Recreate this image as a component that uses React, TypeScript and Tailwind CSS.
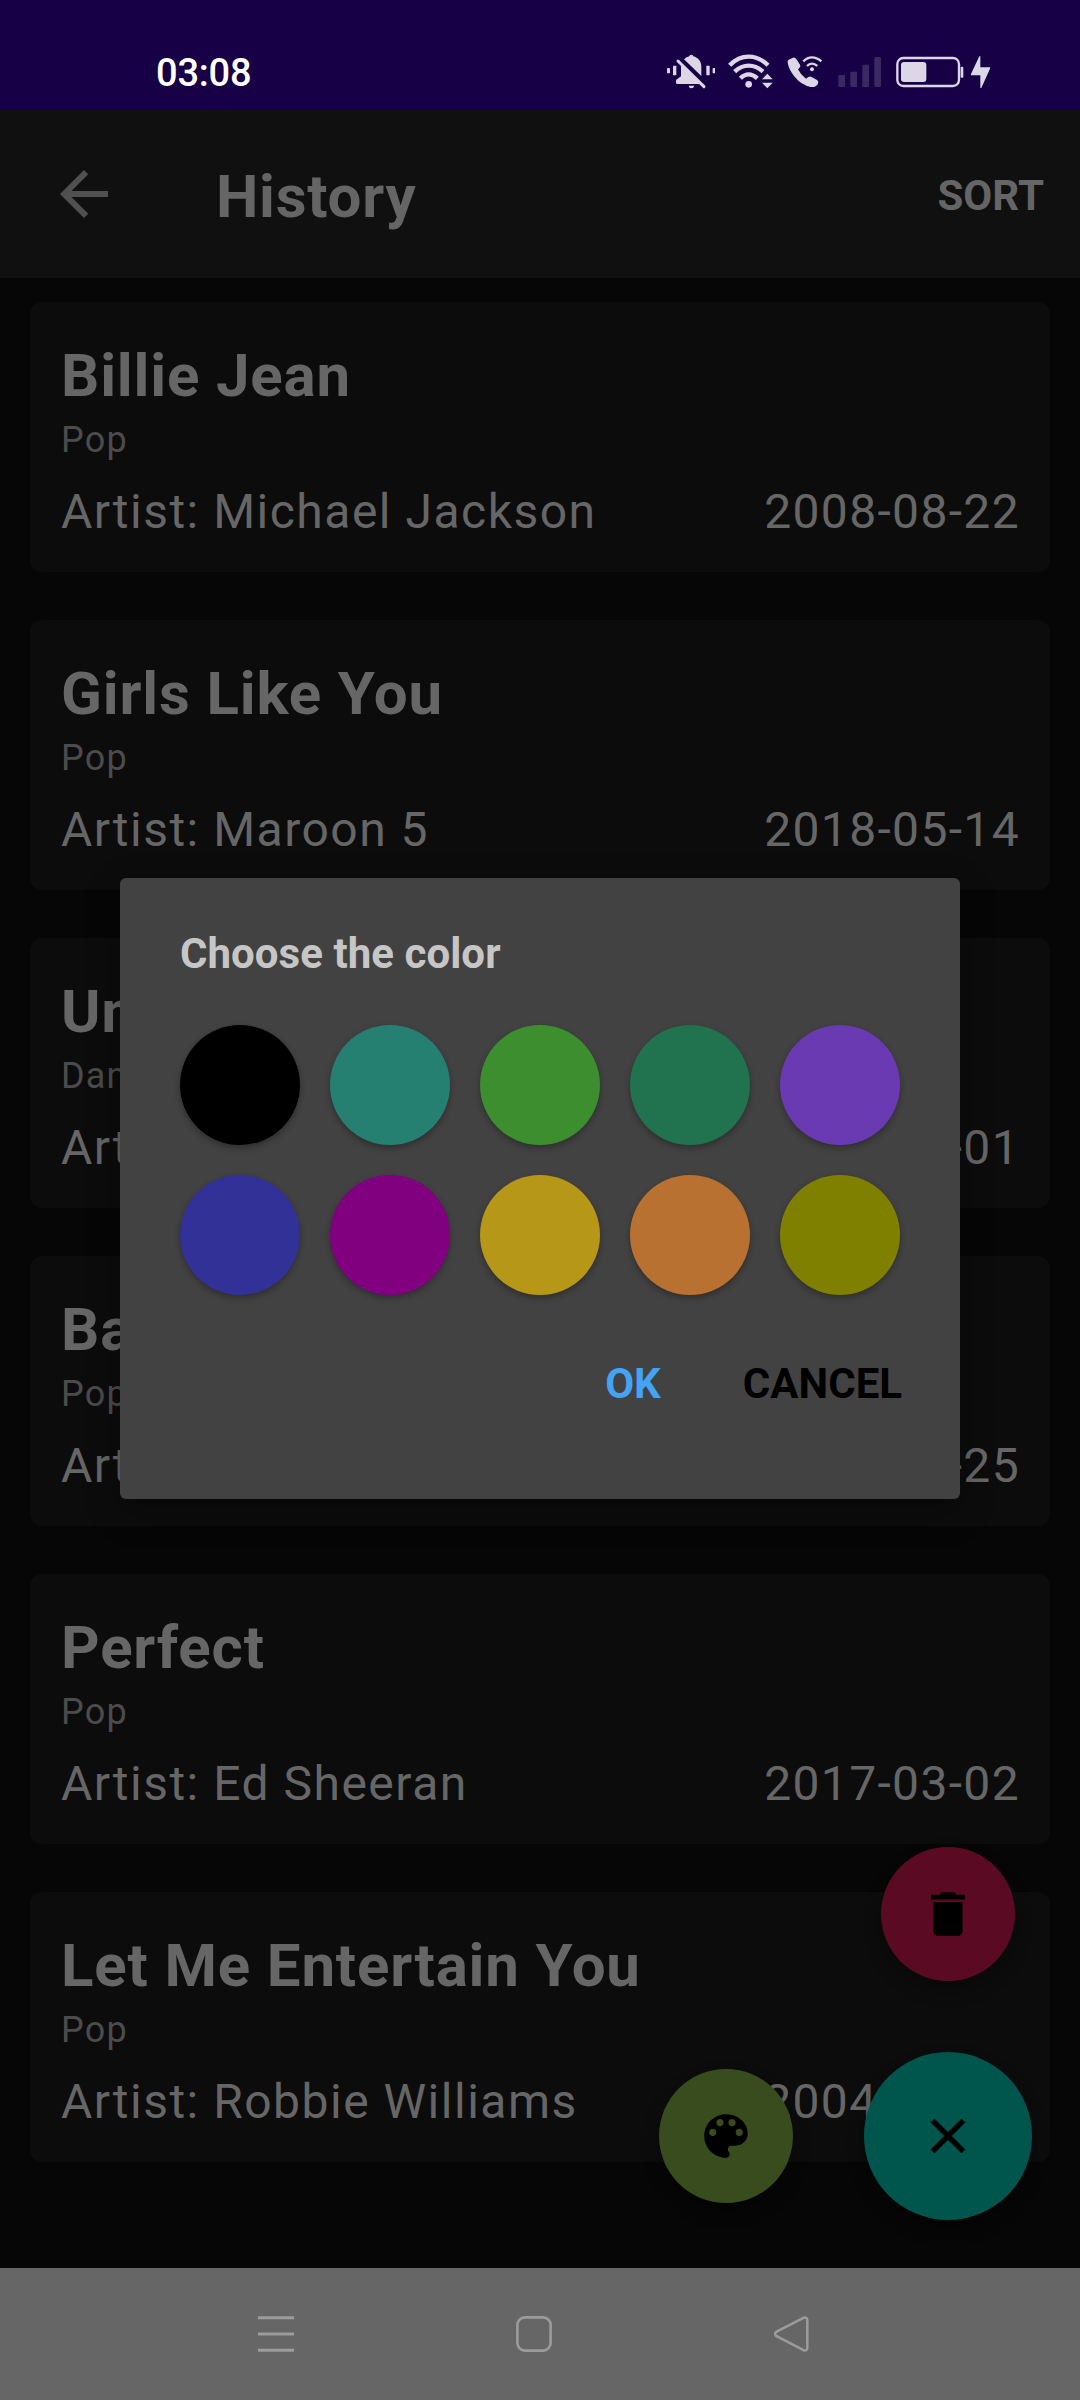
import React from "react";

type Song = { title: string; genre: string; artist: string; date: string };

const songs: Song[] = [
  { title: "Billie Jean", genre: "Pop", artist: "Michael Jackson", date: "2008-08-22" },
  { title: "Girls Like You", genre: "Pop", artist: "Maroon 5", date: "2018-05-14" },
  { title: "Unity", genre: "Dance", artist: "Alan Walker", date: "2019-06-01" },
  { title: "Bad", genre: "Pop", artist: "Michael Jackson", date: "2012-09-25" },
  { title: "Perfect", genre: "Pop", artist: "Ed Sheeran", date: "2017-03-02" },
  { title: "Let Me Entertain You", genre: "Pop", artist: "Robbie Williams", date: "2004-10-18" },
];

const swatches = [
  "bg-[#000000]",
  "bg-[#268072]",
  "bg-[#3c8e2f]",
  "bg-[#21734f]",
  "bg-[#6a3ab2]",
  "bg-[#323198]",
  "bg-[#800080]",
  "bg-[#b69717]",
  "bg-[#b87131]",
  "bg-[#808000]",
];

function StatusBar() {
  return (
    <div className="flex h-[110px] items-start justify-between bg-[#170045] pr-[89px] pl-[156px]">
      <span className="mt-[50px] text-[38px] leading-[46px] font-medium tracking-[-0.2px] text-white">03:08</span>
      <div className="mt-[54px] flex text-[#ddd6e6]">
        {/* muted, vibrating bell */}
        <svg className="h-[34.67px] w-[48.67px]" viewBox="80 72 146 104" fill="currentColor">
          <rect x="80" y="114" width="9" height="16" rx="2" />
          <rect x="98" y="107" width="10" height="29" rx="2" />
          <rect x="198" y="107" width="10" height="29" rx="2" />
          <rect x="217" y="114" width="9" height="16" rx="2" />
          <path d="M147 79q0-5 6-5t6 5c15 4 24 15 24 31v28l-52-50q7-7 16-9zM122 103l58 59h-69q-4 0-4-4v-6q0-3 4-5l11-8zM145 167h17q-2 8-9 8t-8-8z" />
          <path d="M113 93l78 77" stroke="currentColor" strokeWidth="9" strokeLinecap="round" />
        </svg>
        {/* wifi with traffic arrows */}
        <svg className="ml-[13.3px] h-[34.67px] w-[45.33px]" viewBox="266 72 136 104" fill="none" stroke="currentColor" strokeWidth="13">
          <path d="M271 106q25-26 57-26t58 26" />
          <path d="M286 125q19-18 42-18t43 18" />
          <path d="M303 145q12-12 25-12t26 12" />
          <circle cx="328" cy="163" r="10" fill="currentColor" stroke="none" />
          <path d="M368 148l16-17 16 17zM368 158h32l-16 17z" fill="currentColor" stroke="none" />
        </svg>
        {/* wifi calling */}
        <svg className="ml-[13.3px] h-[34.67px] w-[35.33px]" viewBox="442 72 106 104" fill="currentColor">
          <path d="M447 89l13-6q6-2 10 4l11 17q3 6-2 10l-4 4q8 17 24 28l7-5q5-3 10 0l16 9q6 4 3 11-7 12-21 10-29-6-49-31-18-22-21-42-1-6 3-9z" />
          <path d="M491 94q12-12 26-12t28 12M502 108q7-7 15-7t16 7" fill="none" stroke="currentColor" strokeWidth="7" />
          <circle cx="517" cy="118" r="6" />
        </svg>
        {/* no signal */}
        <svg className="ml-[15.3px] h-[34.67px] w-[43.33px] text-[#3b2962]" viewBox="594 72 130 104" fill="currentColor">
          <rect x="595" y="135" width="20" height="36" rx="3" />
          <rect x="631" y="125" width="20" height="46" rx="3" />
          <rect x="667" y="104" width="20" height="67" rx="3" />
          <rect x="703" y="81" width="20" height="90" rx="3" />
        </svg>
        {/* battery */}
        <svg className="ml-[15.3px] h-[34.67px] w-[67.33px]" viewBox="770 72 202 104" fill="currentColor">
          <rect x="774" y="84" width="185" height="84" rx="18" fill="none" stroke="currentColor" strokeWidth="7" />
          <rect x="785" y="96" width="76" height="60" rx="9" />
          <rect x="964" y="110" width="8" height="33" rx="3" />
        </svg>
        <svg className="ml-[6.7px] h-[34.67px] w-[20.67px]" viewBox="992 72 62 104" fill="currentColor">
          <path d="M1023 79v33h28q3 0 1 4l-26 58h-3v-38h-27q-3 0-1-4l25-53z" />
        </svg>
      </div>
    </div>
  );
}

function Header() {
  return (
    <header className="flex h-[168px] items-center bg-[#101010] pr-[36px] pl-[48px] font-bold text-[#656565]">
      <svg className="size-[72px] text-[#505050]" viewBox="0 0 24 24" fill="currentColor">
        <path d="M20 11H7.83l5.59-5.59L12 4l-8 8 8 8 1.41-1.41L7.83 13H20z" />
      </svg>
      <h1 className="ml-[96px] pt-[5px] text-[60px] leading-[70px] tracking-[0.0125em]">History</h1>
      <span className="ml-auto pt-[3px] text-[42px] leading-[50px]">SORT</span>
    </header>
  );
}

function SongCard({ song }: { song: Song }) {
  return (
    <article className="h-[270px] rounded-[12px] bg-[#0c0c0c] pt-[39px] pr-[30px] pl-[31px] text-[#666666]">
      <h2 className="text-[60px] leading-[70px] font-bold tracking-[0.014em]">{song.title}</h2>
      <p className="mt-[8px] text-[36px] leading-[42px] tracking-[0.0333em] text-[#4b4b4b]">{song.genre}</p>
      <div className="mt-[23px] flex justify-between text-[48px] leading-[56px] tracking-[0.03125em]">
        <span>Artist: {song.artist}</span>
        <span className="tracking-[0.028em]">{song.date}</span>
      </div>
    </article>
  );
}

function ColorDialog() {
  return (
    <div className="absolute top-[878px] left-[120px] h-[621px] w-[840px] rounded-[6px] bg-[#424242] px-[60px] pt-[51px] font-bold shadow-[0_12px_36px_rgba(0,0,0,0.3)]">
      <h3 className="text-[42px] leading-[50px] tracking-[0.05px] text-[#c6c6c6]">Choose the color</h3>
      <div className="mt-[46px] grid grid-cols-5 gap-[30px]">
        {swatches.map((c) => (
          <div key={c} className={`${c} size-[120px] rounded-full shadow-[0_3px_6px_rgba(0,0,0,0.3)]`} />
        ))}
      </div>
      <div className="mt-[64px] flex justify-end text-[42px] leading-[50px]">
        <span className="text-[#44a3f2]">OK</span>
        <span className="mr-[-2px] ml-[82px] text-black">CANCEL</span>
      </div>
    </div>
  );
}

function FloatingActions() {
  const fab = "absolute flex items-center justify-center rounded-full shadow-[0_9px_18px_rgba(0,0,0,0.3)]";
  return (
    <>
      <div className={`${fab} top-[1847px] left-[881px] size-[134px] bg-[#5a0b23]`}>
        <svg className="size-[58px]" viewBox="0 0 24 24">
          <path d="M6 19c0 1.1.9 2 2 2h8c1.1 0 2-.9 2-2V7H6v12zM19 4h-3.5l-1-1h-5l-1 1H5v2h14V4z" />
        </svg>
      </div>
      <div className={`${fab} top-[2069px] left-[659px] size-[134px] bg-[#384c1e]`}>
        <svg className="size-[58px]" viewBox="0 0 24 24">
          <path d="M12 3c-4.97 0-9 4.03-9 9s4.03 9 9 9c.83 0 1.5-.67 1.5-1.5 0-.39-.15-.74-.39-1.01-.23-.26-.38-.61-.38-.99 0-.83.67-1.5 1.5-1.5H16c2.76 0 5-2.24 5-5 0-4.42-4.03-8-9-8zm-5.5 9c-.83 0-1.5-.67-1.5-1.5S5.67 9 6.5 9 8 9.67 8 10.5 7.33 12 6.5 12zm3-4C8.67 8 8 7.33 8 6.5S8.67 5 9.5 5s1.5.67 1.5 1.5S10.33 8 9.5 8zm5 0c-.83 0-1.5-.67-1.5-1.5S13.67 5 14.5 5s1.5.67 1.5 1.5S15.33 8 14.5 8zm3 4c-.83 0-1.5-.67-1.5-1.5S16.67 9 17.5 9s1.5.67 1.5 1.5-.67 1.5-1.5 1.5z" />
        </svg>
      </div>
      <div className={`${fab} top-[2052px] left-[864px] size-[168px] bg-[#00564c]`}>
        <svg className="size-[58px]" viewBox="0 0 24 24" stroke="black" strokeWidth="0.3">
          <path d="M19 6.41L17.59 5 12 10.59 6.41 5 5 6.41 10.59 12 5 17.59 6.41 19 12 13.41 17.59 19 19 17.59 13.41 12z" />
        </svg>
      </div>
    </>
  );
}

function NavBar() {
  return (
    <nav className="flex h-[132px] gap-[222px] bg-[#666666] pt-[48px] pl-[258px] text-[#9c9c9c]">
      <svg className="size-[36px]" viewBox="0 0 36 36" stroke="currentColor" strokeWidth="3">
        <path d="M0 1.7h36M0 18h36M0 34.3h36" />
      </svg>
      <svg className="size-[36px]" viewBox="0 0 36 36" fill="none" stroke="currentColor" strokeWidth="2.6">
        <rect x="1.4" y="1.4" width="33.2" height="33.2" rx="7.5" />
      </svg>
      <svg className="size-[36px]" viewBox="0 0 36 36" fill="none" stroke="currentColor" strokeWidth="2.5">
        <path d="M2.6 15.6L29.4 1.8Q33 .6 33.3 4v28q-.3 3.4-3.9 2.2L2.6 20.2Q-.4 18 2.6 15.6z" />
      </svg>
    </nav>
  );
}

export default function App() {
  return (
    <div className="relative flex h-[2400px] w-[1080px] flex-col overflow-hidden bg-[#060606] font-[Roboto,sans-serif]">
      <StatusBar />
      <Header />
      <main className="flex flex-1 flex-col gap-[48px] px-[30px] pt-[24px]">
        {songs.map((s) => (
          <SongCard key={s.title} song={s} />
        ))}
      </main>
      <NavBar />
      <FloatingActions />
      <ColorDialog />
    </div>
  );
}
